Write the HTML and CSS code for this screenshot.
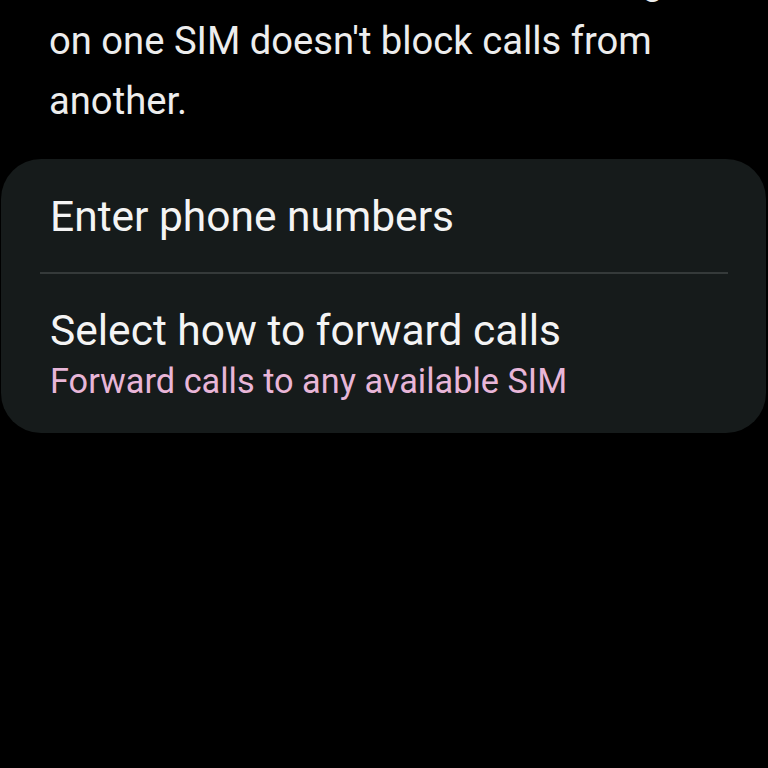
FILE: index.html
```html
<!DOCTYPE html>
<html>
  <head>
    <meta http-equiv="Content-Type" content="text/html; charset=utf-8">
    <meta name="viewport" content="width=device-width,initial-scale=1">
    <title>Call forwarding</title>
    <link rel="stylesheet" href="styles.css">
  </head>
  <body>
    <div id="wrap">
      <p class="intro">Calls will be forwarded so that being<br>on one SIM doesn't block calls from<br>another.</p>
      <div class="card">
        <div class="item">
          <div class="title">Enter phone numbers</div>
        </div>
        <div class="divider"></div>
        <div class="item item-last">
          <div class="title">Select how to forward calls</div>
          <div class="summary">Forward calls to any available SIM</div>
        </div>
      </div>
    </div>
  </body>
</html>
```

FILE: styles.css
```css
* {
  margin: 0;
  padding: 0;
  box-sizing: border-box;
}
html, body {
  height: 100%;
  background: #000;
}
body {
  font-family: Roboto, "Noto Sans", sans-serif;
  color: #f1f1f1;
  overflow: hidden;
}
#wrap {
  min-height: 100%;
}
.intro {
  margin-top: -49px;
  padding: 0 10px 0 49px;
  font-size: 38.2px;
  line-height: 60px;
  color: #ededed;
  white-space: nowrap;
}
.card {
  margin: 28px 2px 0 1px;
  background: #161b1b;
  border-radius: 40px;
}
.item {
  padding: 32px 49px 29px;
}
.item-last {
  padding-top: 31px;
  padding-bottom: 28px;
}
.title {
  font-size: 42.5px;
  line-height: 52px;
  color: #f4f4f4;
}
.summary {
  font-size: 34.3px;
  line-height: 48px;
  color: #e8b6d8;
}
.divider {
  height: 2px;
  margin: 0 38px 0 39px;
  background: #353a3a;
}
```
